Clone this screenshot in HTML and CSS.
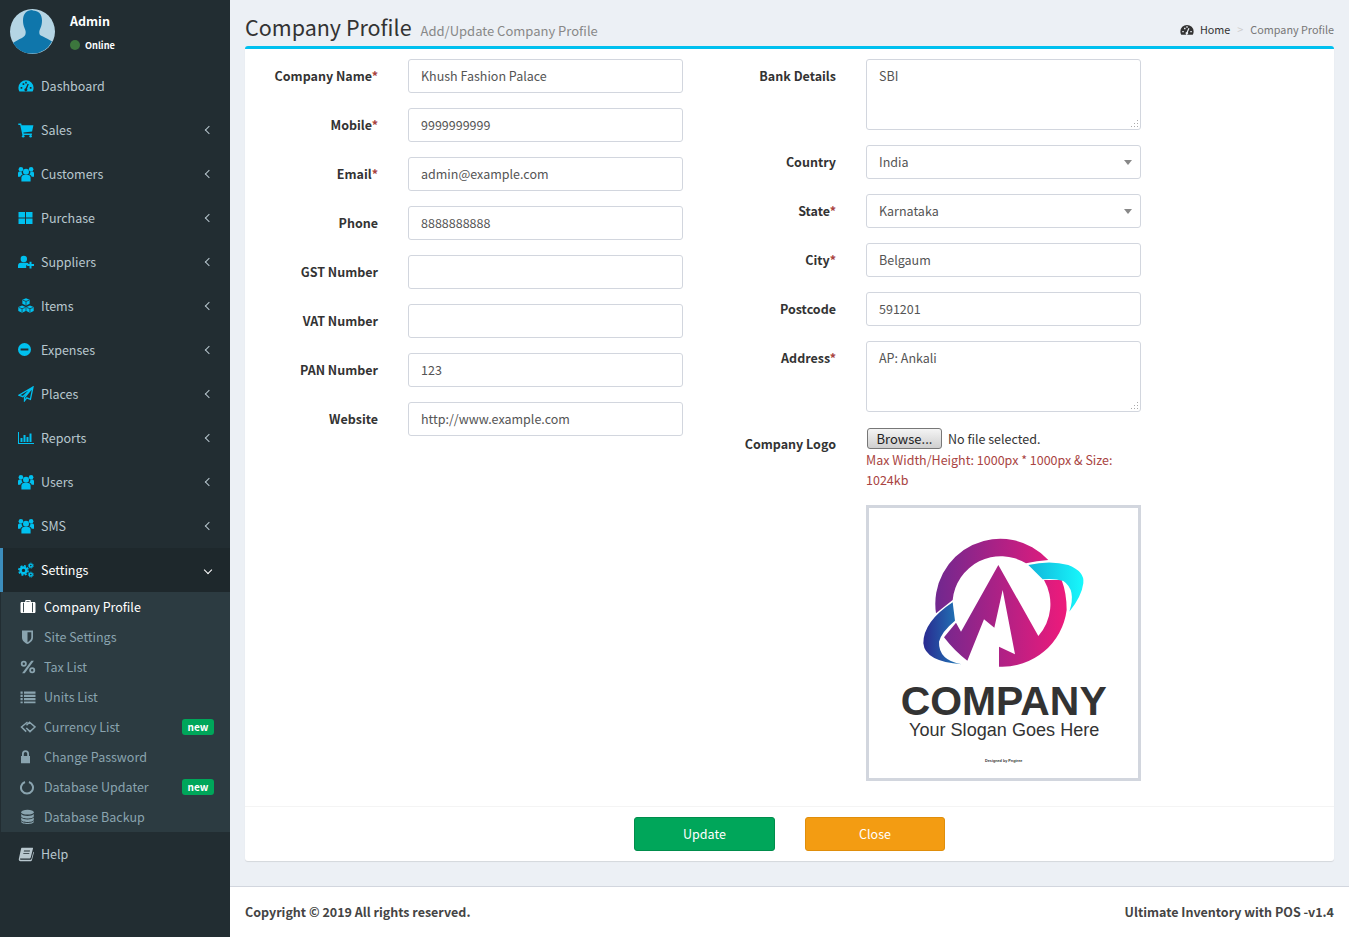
FILE: index.html
```html
<!DOCTYPE html>
<html lang="en">
<head>
    <meta charset="UTF-8">
    <title>Company Profile</title>
    <link rel="stylesheet" href="styles.css">
</head>
<body>
<svg class="sprite" xmlns="http://www.w3.org/2000/svg">
    <symbol id="i-dash" viewBox="0 0 16 16"><path fill-rule="evenodd" d="M8 2.2A7.6 7.6 0 0 0 .4 9.8c0 1.4.4 2.6 1 3.6h13.2c.6-1 1-2.2 1-3.6A7.6 7.6 0 0 0 8 2.2zM2.6 9h1.7v1.7H2.6zM4.6 5.3h1.7V7H4.6zM7.2 3.8h1.6v1.6H7.2zM11.8 9h1.7v1.7h-1.7zM9.6 5.8l-2 4.4a1.5 1.5 0 1 0 1.4.5l1.8-4.5z"/></symbol>
    <symbol id="i-cart" viewBox="0 0 16 16"><path d="M.3 1.6h2.9l.4 1.6H15.4l-1.3 6.4-8.7 1 .3 1h8.2v1.4H4.4L2.2 3H.3z"/><circle cx="5.2" cy="14.2" r="1.3"/><circle cx="12.6" cy="14.2" r="1.3"/></symbol>
    <symbol id="i-users" viewBox="0 0 16 16"><circle cx="8" cy="5.800" r="3"/><path d="M3.400 15.500v-3.800c0-1.700 1.200-2.800 2.400-2.800h4.400c1.200 0 2.400 1.100 2.400 2.800v3.800z"/><circle cx="2.900" cy="3.200" r="2.300"/><circle cx="13.100" cy="3.200" r="2.300"/><path d="M0 10.800V7.300c0-1 .8-1.700 1.700-1.700h2c-.2 1.300.2 2.200 1 2.900-1.500.5-2.200 1.200-2.300 2.300z"/><path d="M16 10.800V7.300c0-1-.8-1.700-1.700-1.700h-2c.2 1.300-.2 2.200-1 2.900 1.500.5 2.200 1.200 2.300 2.300z"/></symbol>
    <symbol id="i-th" viewBox="0 0 16 16"><path d="M0.500 2h6.500v5.500H0.500zM8 2h6.500v5.500H8zM0.500 8.500h6.500V14H0.500zM8 8.500h6.500V14H8z"/></symbol>
    <symbol id="i-userplus" viewBox="0 0 16 16"><circle cx="5.800" cy="5" r="3.200"/><path d="M0 14v-2.300C0 9.800 1.200 8.800 2.800 8.800h5.600c.8 0 1.500.2 2 .7v1.800H8.200v2.700z"/><path d="M11.500 7.800h2V10H16v2h-2.500v2.400h-2V12H9.200v-2h2.300z"/></symbol>
    <symbol id="i-cubes" viewBox="0.300 0.300 15.400 15.400"><path d="M8 .6l3.500 1.300v3.900L8 7.400 4.500 5.800V1.900z"/><path d="M4.200 7.600l3.500 1.300v3.900l-3.500 1.600L.6 12.800V8.900z"/><path d="M11.800 7.600l3.600 1.300v3.900l-3.600 1.600-3.500-1.600V8.900z"/><path class="cut" d="M5 2.400l3 1.200 3-1.200M8 3.600v3.400M1 9.400l3.200 1.200 3.200-1.200M4.200 10.600v3.400M8.700 9.400l3.100 1.200 3.200-1.200M11.800 10.600v3.400"/></symbol>
    <symbol id="i-minus" viewBox="0 0 16 16"><path fill-rule="evenodd" d="M6.500 1a6.500 6.500 0 1 0 0 13 6.500 6.500 0 0 0 0-13zM2.600 6.400h7.800v2.200H2.600z"/></symbol>
    <symbol id="i-plane" viewBox="0 0 16 16"><path class="line" d="M15 1L1 9.200l3.800 1.500L15 1 6.500 11.500v3.300l2.300-2.900 3.600 1.500z"/></symbol>
    <symbol id="i-chart" viewBox="0 0 16 16"><path d="M0 2h1v11h15v1H0z"/><path d="M2.500 8h2v4h-2zM5.500 5h2v7h-2zM8.500 7h2v5h-2zM11.500 3.500h2V12h-2z"/></symbol>
    <symbol id="i-cogs" viewBox="0 0 16 16"><circle class="tooth" cx="5.500" cy="8.400" r="4.600"/><circle class="ring" cx="5.500" cy="8.400" r="2.900"/><circle class="tooth-s" cx="12.800" cy="3.600" r="2.500"/><circle class="ring-s" cx="12.800" cy="3.600" r="1.500"/><circle class="tooth-s" cx="12.800" cy="12.600" r="2.500"/><circle class="ring-s" cx="12.800" cy="12.600" r="1.500"/></symbol>
    <symbol id="i-case" viewBox="0 0 16 16"><path fill-rule="evenodd" d="M5.200 3V1.800c0-.5.4-.8.8-.8h4c.4 0 .8.3.8.8V3h3.400c.7 0 1.300.6 1.300 1.300v8.400c0 .7-.6 1.300-1.300 1.300H1.800C1.100 14 .5 13.400.5 12.700V4.300C.5 3.600 1.100 3 1.800 3zM6.400 3h3.200V2.200H6.400zM3 3.800v9.400h.9V3.800zM12.100 3.800v9.400h.9V3.800z"/></symbol>
    <symbol id="i-shield" viewBox="0 0 16 16"><path fill-rule="evenodd" d="M2 1.500h11v7c0 3.500-3.500 5.700-5.500 6.600-2-.9-5.500-3.100-5.500-6.600zM7.500 3.300v9.900c1.600-.9 3.800-2.500 3.800-4.700V3.300z"/></symbol>
    <symbol id="i-percent" viewBox="0 0 16 16"><path fill-rule="evenodd" d="M3.800 1.800a3 3 0 1 0 0 6 3 3 0 0 0 0-6zM3.800 3.600a1.200 1.200 0 1 1 0 2.400 1.200 1.200 0 0 1 0-2.400zM12.200 8.200a3 3 0 1 0 0 6 3 3 0 0 0 0-6zM12.200 10a1.200 1.200 0 1 1 0 2.400 1.200 1.200 0 0 1 0-2.400z"/><path d="M11.300 1.800h2.600L4.700 14.200H2.100z"/></symbol>
    <symbol id="i-list" viewBox="0 0 16 16"><path d="M.5 2.500h2.200v2.200H.5zM.5 5.800h2.200V8H.5zM.5 9.100h2.200v2.200H.5zM.5 12.400h2.200v1.800H.5zM4 2.500h11.500v2.200H4zM4 5.800h11.500V8H4zM4 9.100h11.500v2.200H4zM4 12.400h11.500v1.800H4z"/></symbol>
    <symbol id="i-swap" viewBox="0 0 16 16"><path class="line heavy" d="M7.500 3L1.500 8l4.700 4.600M6.300 9l3.700 3.600L15 8 9.500 3.300 6.500 6.200"/></symbol>
    <symbol id="i-lock" viewBox="0 0 16 16"><path fill-rule="evenodd" d="M1 7h1V4.800a3.500 3.500 0 0 1 7 0V7h1v7.200H1zM3.800 7h3.400V4.800a1.700 1.700 0 0 0-3.400 0z"/></symbol>
    <symbol id="i-notch" viewBox="0 0 16 16"><path class="thick" d="M9 2.940A6 6 0 1 1 5 2.940"/></symbol>
    <symbol id="i-db" viewBox="0 0 16 16"><ellipse cx="7.500" cy="3.200" rx="6.300" ry="2.400"/><path d="M1.200 4.900c.8 1.300 3.500 2 6.300 2s5.500-.7 6.300-2v2.400c0 1.300-2.800 2.300-6.300 2.300s-6.300-1-6.300-2.300z"/><path d="M1.200 8.400c.8 1.300 3.500 2 6.300 2s5.500-.7 6.300-2v2.400c0 1.300-2.800 2.300-6.300 2.300s-6.300-1-6.300-2.300z"/><path d="M1.200 11.900c.8 1.300 3.500 2 6.300 2s5.500-.7 6.300-2v.9c0 1.300-2.800 2.300-6.300 2.300s-6.300-1-6.300-2.300z"/></symbol>
    <symbol id="i-book" viewBox="0 0 16 16"><path fill-rule="evenodd" d="M4.200 1.800h10.300c.5 0 .6.400.5.800l-2.200 8.600c-.2.700-.6 1.300-1.400 1.300H2.600c-.5 0-.8.300-.6.700.1.300.4.500.8.500h9.800c.4 0 .6-.2.800-.6l2-7.300.6.400-2.100 8c-.2.600-.7 1-1.300 1H2.400C1.300 15.200.6 14.200.8 13.100L3 3c.1-.7.500-1.200 1.200-1.200zM6 4.600l-.2.900h6l.2-.9zM5.400 6.900l-.2.900h6l.2-.9z"/></symbol>
</svg>

<div class="wrapper">
    <!--sidebar-->
    <aside class="sidebar">
        <div class="user-panel">
            <svg class="avatar" viewBox="0 0 45 45">
                <circle cx="22.500" cy="22.500" r="22.500" fill="#b5d5e4"/>
                <path fill="#0f76ab" d="M22.500 1.500c6 0 9.500 3.500 9.500 10 0 3-.5 5-1.500 7.500-1 2.500-1.500 3.500-1 6 .5 2 6 3 12.500 7.500A22.500 22.500 0 0 1 3 34c6.500-4.500 12-5.500 12.500-9 .5-2.500 0-3.500-1-6-1-2.500-1.500-4.500-1.500-7.500 0-6.500 3.500-10.500 9.500-10.500z"/>
            </svg>
            <div class="user-info">
                <p class="user-name">Admin</p>
                <p class="user-status"><span class="dot"></span>Online</p>
            </div>
        </div>
        <ul class="menu">
            <li><a><svg class="icon"><use href="#i-dash"/></svg><span>Dashboard</span></a></li>
            <li><a><svg class="icon"><use href="#i-cart"/></svg><span>Sales</span><i class="arrow"></i></a></li>
            <li><a><svg class="icon"><use href="#i-users"/></svg><span>Customers</span><i class="arrow"></i></a></li>
            <li><a><svg class="icon"><use href="#i-th"/></svg><span>Purchase</span><i class="arrow"></i></a></li>
            <li><a><svg class="icon"><use href="#i-userplus"/></svg><span>Suppliers</span><i class="arrow"></i></a></li>
            <li><a><svg class="icon"><use href="#i-cubes"/></svg><span>Items</span><i class="arrow"></i></a></li>
            <li><a><svg class="icon"><use href="#i-minus"/></svg><span>Expenses</span><i class="arrow"></i></a></li>
            <li><a><svg class="icon"><use href="#i-plane"/></svg><span>Places</span><i class="arrow"></i></a></li>
            <li><a><svg class="icon"><use href="#i-chart"/></svg><span>Reports</span><i class="arrow"></i></a></li>
            <li><a><svg class="icon"><use href="#i-users"/></svg><span>Users</span><i class="arrow"></i></a></li>
            <li><a><svg class="icon"><use href="#i-users"/></svg><span>SMS</span><i class="arrow"></i></a></li>
            <li class="active"><a><svg class="icon"><use href="#i-cogs"/></svg><span>Settings</span><i class="arrow down"></i></a>
                <ul class="submenu">
                    <li class="current"><a><svg class="icon"><use href="#i-case"/></svg><span>Company Profile</span></a></li>
                    <li><a><svg class="icon"><use href="#i-shield"/></svg><span>Site Settings</span></a></li>
                    <li><a><svg class="icon"><use href="#i-percent"/></svg><span>Tax List</span></a></li>
                    <li><a><svg class="icon"><use href="#i-list"/></svg><span>Units List</span></a></li>
                    <li><a><svg class="icon"><use href="#i-swap"/></svg><span>Currency List</span><b class="badge">new</b></a></li>
                    <li><a><svg class="icon"><use href="#i-lock"/></svg><span>Change Password</span></a></li>
                    <li><a><svg class="icon"><use href="#i-notch"/></svg><span>Database Updater</span><b class="badge">new</b></a></li>
                    <li><a><svg class="icon"><use href="#i-db"/></svg><span>Database Backup</span></a></li>
                </ul>
            </li>
            <li><a><svg class="icon book"><use href="#i-book"/></svg><span>Help</span></a></li>
        </ul>
    </aside>

    <div class="main">
        <header class="content-header">
            <h1>Company Profile</h1>
            <small>Add/Update Company Profile</small>
            <ol class="breadcrumb">
                <li><svg class="icon"><use href="#i-dash"/></svg>Home</li>
                <li class="sep">&gt;</li>
                <li class="last">Company Profile</li>
            </ol>
        </header>

        <form class="box">
            <div class="box-body">
                <!--left column-->
                <div class="col">
                    <div class="row"><label>Company Name<em>*</em></label><input type="text" value="Khush Fashion Palace"></div>
                    <div class="row"><label>Mobile<em>*</em></label><input type="text" value="9999999999"></div>
                    <div class="row"><label>Email<em>*</em></label><input type="text" value="admin@example.com"></div>
                    <div class="row"><label>Phone</label><input type="text" value="8888888888"></div>
                    <div class="row"><label>GST Number</label><input type="text"></div>
                    <div class="row"><label>VAT Number</label><input type="text"></div>
                    <div class="row"><label>PAN Number</label><input type="text" value="123"></div>
                    <div class="row"><label>Website</label><input type="text" value="http://www.example.com"></div>
                </div>
                <!--right column-->
                <div class="col">
                    <div class="row"><label>Bank Details</label><textarea>SBI</textarea></div>
                    <div class="row"><label>Country</label><div class="select"><select><option>India</option></select></div></div>
                    <div class="row"><label>State<em>*</em></label><div class="select"><select><option>Karnataka</option></select></div></div>
                    <div class="row"><label>City<em>*</em></label><input type="text" value="Belgaum"></div>
                    <div class="row"><label>Postcode</label><input type="text" value="591201"></div>
                    <div class="row"><label>Address<em>*</em></label><textarea>AP: Ankali</textarea></div>
                    <div class="row logo-row">
                        <label>Company Logo</label>
                        <div class="logo-field">
                            <div class="file"><button type="button">Browse...</button><span>No file selected.</span></div>
                            <p class="hint">Max Width/Height: 1000px * 1000px &amp; Size: 1024kb</p>
                            <svg class="logo" viewBox="27 24 807 810">
                                <defs>
                                    <linearGradient id="g-main" gradientUnits="userSpaceOnUse" x1="225" y1="0" x2="620" y2="0">
                                        <stop offset="0" stop-color="#70288f"/>
                                        <stop offset="1" stop-color="#ee1a7b"/>
                                    </linearGradient>
                                    <linearGradient id="g-blue" gradientUnits="userSpaceOnUse" x1="190" y1="0" x2="300" y2="0">
                                        <stop offset="0" stop-color="#2a2a90"/>
                                        <stop offset="1" stop-color="#1f7ab8"/>
                                    </linearGradient>
                                    <linearGradient id="g-cyan" gradientUnits="userSpaceOnUse" x1="505" y1="0" x2="670" y2="0">
                                        <stop offset="0" stop-color="#12b4da"/>
                                        <stop offset="1" stop-color="#17f8fc"/>
                                    </linearGradient>
                                </defs>
                                <path fill="url(#g-main)" d="M228 340A195 195 0 0 1 565 180Q530 182 498 190A145 145 0 0 0 278 300Z"/>
                                <path fill="url(#g-main)" d="M415 195L303 395 288 368 252 412Q285 455 322 482L372 358 403 383 428 270 465 463 417 440 417 500A195 195 0 0 0 620 330Q620 280 605 240L552 240A145 145 0 0 1 535 408Z"/>
                                <path fill="url(#g-blue)" d="M278 307Q190 365 190 430Q195 485 305 493Q235 480 237 425Q245 395 285 362Z"/>
                                <path fill="url(#g-cyan)" d="M505 195Q570 180 625 195Q675 215 670 250Q665 290 628 335Q650 270 610 243Q585 235 548 238Z"/>
                                <text class="logo-name" x="122" y="644" textLength="618" lengthAdjust="spacingAndGlyphs">COMPANY</text>
                                <text class="logo-slogan" x="147" y="708" textLength="571" lengthAdjust="spacingAndGlyphs">Your Slogan Goes Here</text>
                                <text class="logo-credit" x="375" y="786" textLength="112" lengthAdjust="spacingAndGlyphs">Designed by Pngtree</text>
                            </svg>
                        </div>
                    </div>
                </div>
            </div>
            <div class="box-footer">
                <button type="button" class="btn btn-update">Update</button>
                <button type="button" class="btn btn-close">Close</button>
            </div>
        </form>

        <footer class="page-footer">
            <strong>Copyright © 2019 All rights reserved.</strong>
            <strong>Ultimate Inventory with POS -v1.4</strong>
        </footer>
    </div>
</div>
</body>
</html>
```

FILE: styles.css
```css
* {
    padding: 0;
    margin: 0;
    list-style: none;
    box-sizing: border-box;
}

body {
    font-family: "Noto Sans CJK SC", "Noto Sans", sans-serif;
    font-size: 12.5px;
    line-height: 20px;
    color: #333;
    background: #ecf0f5;
}

.sprite {
    display: none;
}

.wrapper {
    display: flex;
    min-height: 937px;
}

.icon {
    width: 16px;
    height: 16px;
    flex: none;
    fill: currentColor;
}

/* icon parts */
.line {
    fill: none;
    stroke: currentColor;
    stroke-width: 1.3;
}

.line.heavy {
    stroke-width: 1.5;
}

.thick {
    fill: none;
    stroke: currentColor;
    stroke-width: 2;
}

.cut {
    fill: none;
    stroke: #222d32;
    stroke-width: 0.7;
}

.tooth {
    fill: none;
    stroke: currentColor;
    stroke-width: 1.6;
    stroke-dasharray: 2 1.6;
}

.ring {
    fill: none;
    stroke: currentColor;
    stroke-width: 2.4;
}

.tooth-s {
    fill: none;
    stroke: currentColor;
    stroke-width: 1;
    stroke-dasharray: 1.2 1;
}

.ring-s {
    fill: none;
    stroke: currentColor;
    stroke-width: 1.4;
}

/* sidebar */
.sidebar {
    width: 230px;
    flex: none;
    background: #222d32;
    color: #b8c7ce;
}

.user-panel {
    display: flex;
    height: 64px;
    padding: 9px 0 0 10px;
}

.avatar {
    width: 45px;
    height: 45px;
}

.user-info {
    padding: 2px 0 0 15px;
    color: #fff;
}

.user-name {
    font-weight: bold;
}

.user-status {
    display: flex;
    align-items: center;
    margin-top: 4px;
    font-size: 9.2px;
    font-weight: bold;
}

.dot {
    width: 10px;
    height: 10px;
    margin-right: 5px;
    border-radius: 50%;
    background: #3c763d;
}

.menu > li > a {
    display: flex;
    align-items: center;
    height: 44px;
    padding: 0 15px 0 18px;
}

.menu > li > a .icon {
    margin-right: 7px;
    color: #00c0ef;
}

.menu > li > a .icon.book {
    color: #b8c7ce;
}

.arrow {
    width: 6px;
    height: 6px;
    margin: 0 3px 0 auto;
    border-left: 1.5px solid #b8c7ce;
    border-bottom: 1.5px solid #b8c7ce;
    transform: rotate(45deg);
}

.arrow.down {
    border-color: #fff;
    margin-right: 4px;
    transform: rotate(-45deg);
}

.menu > li.active > a {
    padding-left: 15px;
    border-left: 3px solid #3c8dbc;
    background: #1e282c;
    color: #fff;
}

.submenu {
    margin-left: 1px;
    background: #2c3b41;
    color: #8aa4af;
}

.submenu a {
    display: flex;
    align-items: center;
    height: 30px;
    padding: 0 16px 0 19px;
}

.submenu .icon {
    margin-right: 8px;
}

.submenu .current {
    color: #fff;
}

.badge {
    margin-left: auto;
    width: 32px;
    height: 16px;
    border-radius: 3px;
    background: #00a65a;
    color: #fff;
    font-size: 10px;
    line-height: 15px;
    text-align: center;
}

/* content */
.main {
    flex: 1;
    display: flex;
    flex-direction: column;
    min-width: 0;
}

.content-header {
    display: flex;
    align-items: baseline;
    height: 46px;
    padding: 9px 15px 0;
}

.content-header h1 {
    font-size: 21.5px;
    font-weight: normal;
    line-height: 36px;
}

.content-header small {
    margin-left: 9px;
    font-size: 13px;
    color: #888;
}

.breadcrumb {
    display: flex;
    align-items: center;
    margin-left: auto;
    font-size: 10.8px;
    transform: translateY(-2px);
}

.breadcrumb .icon {
    width: 14px;
    height: 14px;
    margin-right: 6px;
    vertical-align: -3px;
}

.breadcrumb .sep {
    margin: 0 7px;
    color: #ccc;
}

.breadcrumb .last {
    color: #777;
}

.box {
    margin: 0 15px;
    background: #fff;
    border-top: 3px solid #00c0ef;
    border-radius: 3px;
    box-shadow: 0 1px 1px rgba(0, 0, 0, 0.1);
}

.box-body {
    display: flex;
    padding-top: 10px;
}

.col {
    width: 458px;
}

.row {
    display: flex;
    margin-bottom: 15px;
}

.row label {
    width: 133px;
    margin-right: 30px;
    padding-top: 7px;
    font-weight: bold;
    text-align: right;
}

.row em {
    font-style: normal;
    color: #a94442;
}

.row input,
.row textarea,
.row select {
    display: block;
    width: 275px;
    height: 34px;
    padding: 5px 12px 7px;
    border: 1px solid #d2d6de;
    border-radius: 3px;
    background: #fff;
    color: #555;
    font: inherit;
}

.row select {
    padding: 6px 12px;
    appearance: none;
}

/* firefox style resize corner, drawn as dots */
.row textarea {
    height: 71px;
    padding-top: 6px;
    resize: none;
    background: #fff url("data:image/svg+xml,%3Csvg xmlns='http://www.w3.org/2000/svg' width='7' height='7'%3E%3Cpath fill='%23aaa' d='M6 0h1v1H6zM3 3h1v1H3zM6 3h1v1H6zM0 6h1v1H0zM3 6h1v1H3zM6 6h1v1H6z'/%3E%3C/svg%3E") no-repeat right 2px bottom 2px;
}

.select {
    position: relative;
}

/* select arrow */
.select::after {
    content: "";
    position: absolute;
    right: 9px;
    top: 15px;
    border-left: 4px solid transparent;
    border-right: 4px solid transparent;
    border-top: 5px solid #888;
}

.logo-row {
    margin: 16px 0 25px;
}

.logo-row label {
    padding-top: 6px;
}

.logo-field {
    width: 275px;
}

.file {
    display: flex;
    align-items: center;
    height: 21px;
}

.file button {
    width: 75px;
    height: 21px;
    margin: 0 6px 0 1px;
    border: 1px solid #777;
    border-radius: 3px;
    background: linear-gradient(#f4f4f4, #cfcfcf);
    color: #222;
    font: inherit;
    font-size: 13px;
    line-height: 18px;
}

.hint {
    margin: 1px 0 15px;
    color: #a94442;
}

.logo {
    display: block;
    width: 275px;
    height: 276px;
    border: 3px solid #d2d6de;
}

.logo-name {
    font-family: "Liberation Sans", sans-serif;
    font-size: 120px;
    font-weight: bold;
    fill: #333;
}

.logo-slogan {
    font-family: "Liberation Sans", sans-serif;
    font-size: 56px;
    fill: #333;
}

.logo-credit {
    font-family: "Liberation Sans", sans-serif;
    font-size: 12px;
    font-weight: bold;
    fill: #333;
}

.box-footer {
    display: flex;
    justify-content: center;
    gap: 30px;
    padding: 10px;
    border-top: 1px solid #f4f4f4;
}

.btn {
    width: 141px;
    height: 34px;
    border: 1px solid;
    border-radius: 3px;
    color: #fff;
    font: inherit;
}

.btn-update {
    background: #00a65a;
    border-color: #008d4c;
}

.btn-close {
    width: 140px;
    background: #f39c12;
    border-color: #e08e0b;
}

.page-footer {
    display: flex;
    justify-content: space-between;
    align-items: center;
    height: 51px;
    margin-top: 25px;
    padding: 0 15px;
    background: #fff;
    border-top: 1px solid #d2d6de;
    color: #444;
}
```
